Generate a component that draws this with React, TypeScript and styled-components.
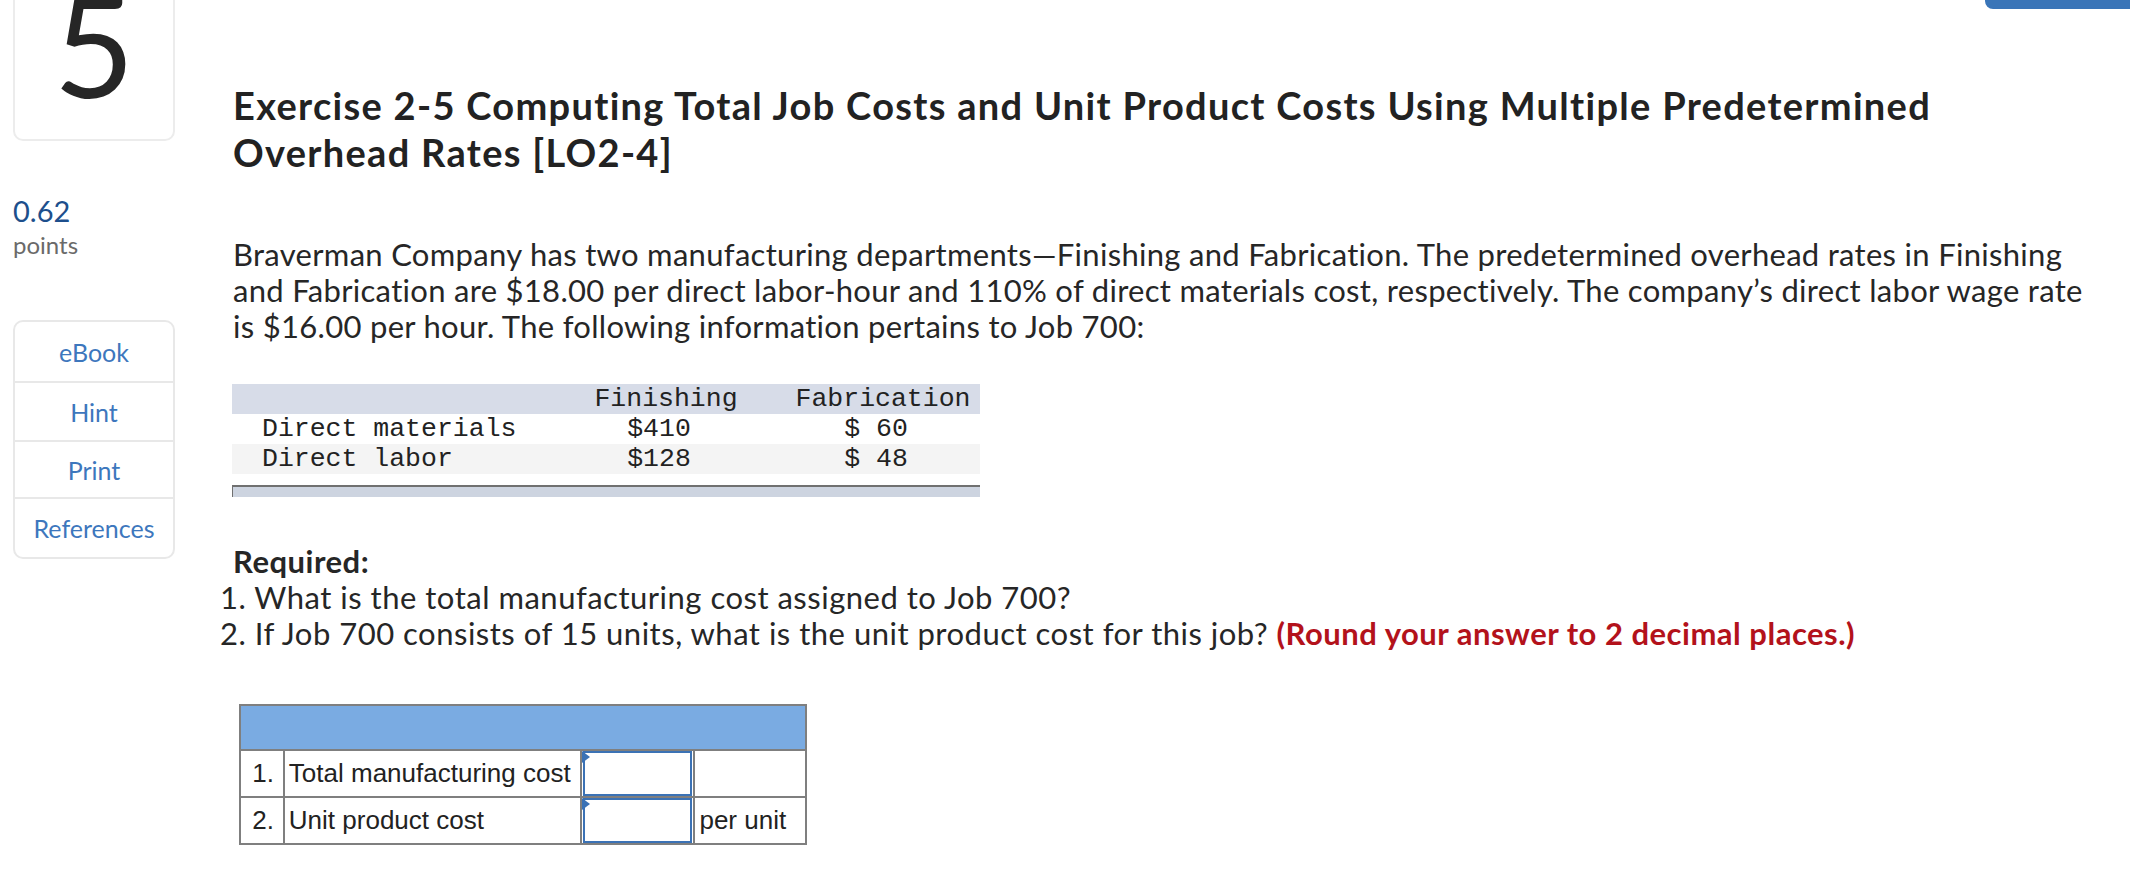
import React from "react";
import styled, { createGlobalStyle } from "styled-components";

const Global = createGlobalStyle`
  html, body { margin: 0; padding: 0; background: #ffffff; overflow: hidden; }
  body { font-family: "Lato", "Noto Sans", sans-serif; color: #2a2a2a; }
`;

const Page = styled.div`
  display: flex;
  width: 2130px;
  height: 882px;
  overflow: hidden;
`;

const Sidebar = styled.aside`
  flex: none;
  width: 162px;
  margin-left: 13px;
  display: flex;
  flex-direction: column;
`;

const NumberBox = styled.div`
  margin-top: -20px;
  height: 161px;
  box-sizing: border-box;
  border: 2px solid #ececec;
  border-radius: 10px;
  padding-top: 12px;
  text-align: center;
  font-size: 140px;
  line-height: 100px;
  color: #262626;
`;

const Score = styled.div`
  margin-top: 54px;
  font-size: 29px;
  line-height: 32px;
  color: #1d4f8c;
`;

const ScoreLabel = styled.div`
  margin-top: 4px;
  font-size: 24px;
  line-height: 28px;
  color: #6a6a6a;
`;

const ToolGroup = styled.nav`
  margin-top: 61px;
  border: 2px solid #e8e8e8;
  border-radius: 10px;
  display: flex;
  flex-direction: column;
`;

const ToolItem = styled.div<{ $h: number }>`
  height: ${(p) => p.$h}px;
  display: flex;
  align-items: center;
  justify-content: center;
  font-size: 25px;
  color: #3d77bd;
  & + & { border-top: 2px solid #e8e8e8; }
`;

const Main = styled.main`
  flex: 1;
  margin-left: 58px;
  display: flex;
  flex-direction: column;
  min-width: 0;
`;

const TopBar = styled.div`
  height: 9px;
  display: flex;
  justify-content: flex-end;
`;

const TopButton = styled.div`
  width: 145px;
  height: 9px;
  background: #3a75b8;
  border-bottom-left-radius: 8px;
`;

const Title = styled.h1`
  margin: 73px 0 0 0;
  max-width: 1760px;
  font-size: 38px;
  line-height: 47px;
  letter-spacing: 1.3px;
  font-weight: 700;
  color: #222222;
`;

const Para = styled.p`
  margin: 60px 0 0 0;
  width: 1895px;
  font-size: 31px;
  line-height: 36px;
  letter-spacing: 0.3px;
  color: #262626;
`;

const DataTable = styled.div`
  margin-top: 40px;
  margin-left: -1px;
  width: 748px;
  font-family: "Liberation Mono", "Courier New", monospace;
  font-size: 26.5px;
  color: #222;
`;

const DataRow = styled.div<{ $bg: string }>`
  display: grid;
  grid-template-columns: 354px 160px 40px 194px;
  height: 30px;
  align-items: center;
  background: ${(p) => p.$bg};
  white-space: pre;
`;

const LabelCell = styled.span`
  padding-left: 30px;
`;

const NumCell = styled.span<{ $head?: boolean }>`
  text-align: center;
  padding-right: ${(p) => (p.$head ? 0 : 14)}px;
`;

const DataFooter = styled.div`
  margin-top: 11px;
  height: 10px;
  background: #cdd4e0;
  border-top: 2px solid #707070;
  border-left: 1px solid #707070;
`;

const Required = styled.div`
  margin-top: 46px;
  font-size: 31px;
  line-height: 36px;
  letter-spacing: 0.5px;
  color: #262626;
`;

const Strong = styled.div`
  font-weight: 700;
`;

const ReqLine = styled.div`
  margin-left: -13px;
`;

const Red = styled.span`
  font-weight: 700;
  color: #b3121b;
`;

const AnswerTable = styled.table`
  margin-top: 53px;
  margin-left: 6px;
  border-collapse: collapse;
  width: 568px;
  font-family: "Liberation Sans", Arial, sans-serif;
  font-size: 26px;
  color: #222;
`;

const HeadCell = styled.td`
  height: 43px;
  background: #7aabe2;
  border: 2px solid #7f7f7f;
  padding: 0;
`;

const Cell = styled.td<{ $w: number }>`
  width: ${(p) => p.$w}px;
  height: 45px;
  border: 2px solid #7f7f7f;
  padding: 0 4px;
  white-space: nowrap;
  box-sizing: border-box;
`;

const InputCell = styled.td`
  width: 115px;
  height: 45px;
  border: 2px solid #7f7f7f;
  padding: 0;
  position: relative;
`;

const InputBox = styled.div`
  height: 45px;
  box-sizing: border-box;
  border: 2px solid #3b72b5;
  background: #fff;
  margin: 0 1px;
`;

const Flag = styled.span`
  position: absolute;
  left: 0;
  top: 0;
  width: 0;
  height: 0;
  border-left: 8px solid #3b72b5;
  border-top: 6px solid transparent;
  border-bottom: 6px solid transparent;
`;

export default function App() {
  return (
    <>
      <Global />
      <Page>
        <Sidebar>
          <NumberBox>5</NumberBox>
          <Score>0.62</Score>
          <ScoreLabel>points</ScoreLabel>
          <ToolGroup>
            <ToolItem $h={59}>eBook</ToolItem>
            <ToolItem $h={57}>Hint</ToolItem>
            <ToolItem $h={55}>Print</ToolItem>
            <ToolItem $h={58}>References</ToolItem>
          </ToolGroup>
        </Sidebar>
        <Main>
          <TopBar>
            <TopButton />
          </TopBar>
          <Title>
            Exercise 2-5 Computing Total Job Costs and Unit Product Costs Using Multiple
            Predetermined Overhead Rates [LO2-4]
          </Title>
          <Para>
            Braverman Company has two manufacturing departments—Finishing and Fabrication. The
            predetermined overhead rates in Finishing
            <br />
            and Fabrication are $18.00 per direct labor-hour and 110% of direct materials cost,
            respectively. The company’s direct labor wage rate
            <br />
            is $16.00 per hour. The following information pertains to Job 700:
          </Para>
          <DataTable>
            <DataRow $bg="#d7dce8">
              <LabelCell />
              <NumCell $head>Finishing</NumCell>
              <span />
              <NumCell $head>Fabrication</NumCell>
            </DataRow>
            <DataRow $bg="#ffffff">
              <LabelCell>Direct materials</LabelCell>
              <NumCell>$410</NumCell>
              <span />
              <NumCell>$ 60</NumCell>
            </DataRow>
            <DataRow $bg="#f4f4f4">
              <LabelCell>Direct labor</LabelCell>
              <NumCell>$128</NumCell>
              <span />
              <NumCell>$ 48</NumCell>
            </DataRow>
            <DataFooter />
          </DataTable>
          <Required>
            <Strong>Required:</Strong>
            <ReqLine>1. What is the total manufacturing cost assigned to Job 700?</ReqLine>
            <ReqLine>
              2. If Job 700 consists of 15 units, what is the unit product cost for this job?{" "}
              <Red>(Round your answer to 2 decimal places.)</Red>
            </ReqLine>
          </Required>
          <AnswerTable>
            <tbody>
              <tr>
                <HeadCell colSpan={4} />
              </tr>
              <tr>
                <Cell $w={44}>&nbsp;1.</Cell>
                <Cell $w={297}>Total manufacturing cost</Cell>
                <InputCell>
                  <InputBox />
                  <Flag />
                </InputCell>
                <Cell $w={112} />
              </tr>
              <tr>
                <Cell $w={44}>&nbsp;2.</Cell>
                <Cell $w={297}>Unit product cost</Cell>
                <InputCell>
                  <InputBox />
                  <Flag />
                </InputCell>
                <Cell $w={112}>per unit</Cell>
              </tr>
            </tbody>
          </AnswerTable>
        </Main>
      </Page>
    </>
  );
}
